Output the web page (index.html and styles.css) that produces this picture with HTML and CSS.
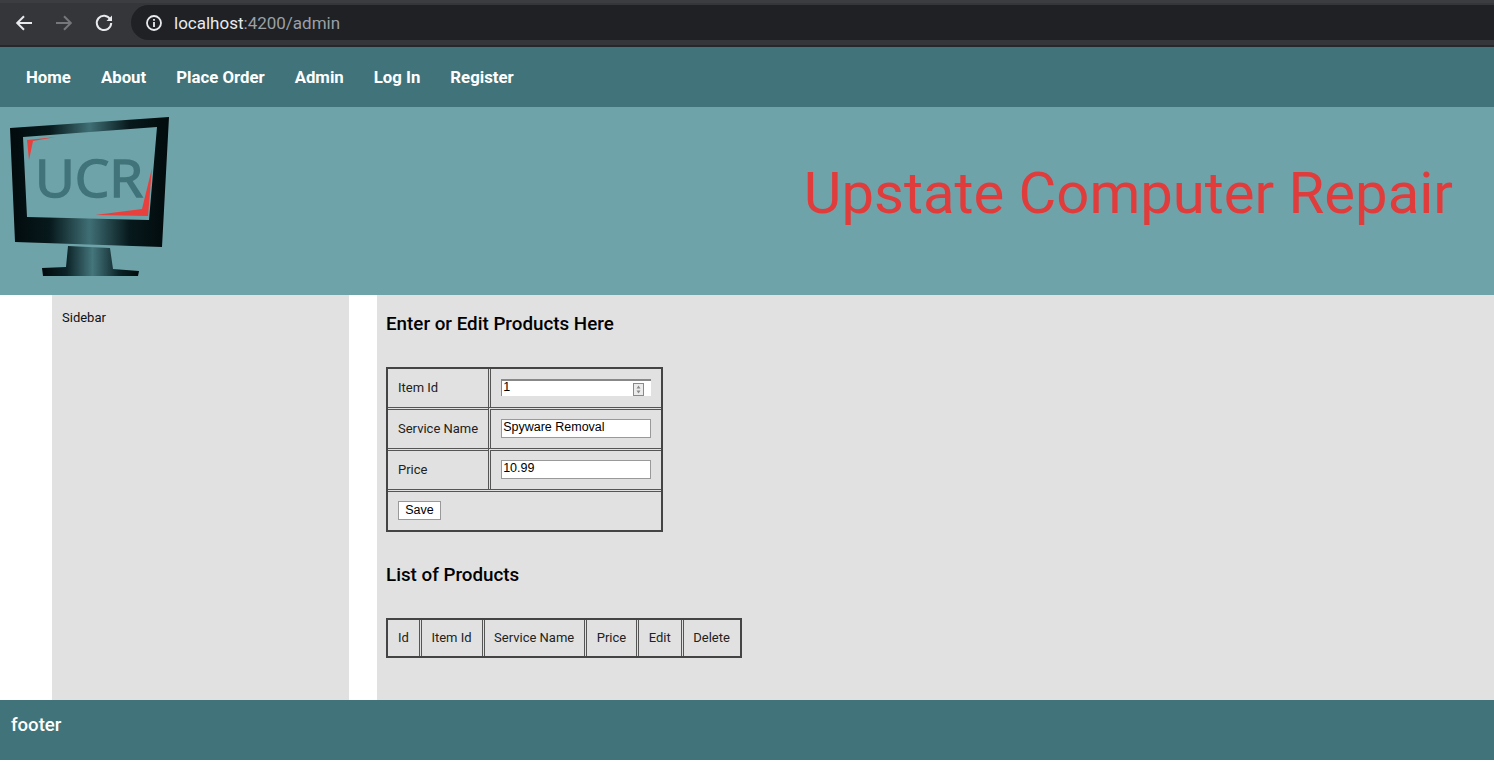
FILE: index.html
```html
<!DOCTYPE html>
<html lang="en">
<head>
<meta charset="utf-8">
<title>Upstate Computer Repair</title>
<link rel="stylesheet" href="styles.css">
</head>
<body>
<div class="chrome">
  <svg class="chrome-ico" width="20" height="20" viewBox="0 0 20 20"><path d="M18 10H3.5M10 3.2L3.2 10l6.8 6.8" fill="none" stroke="#e8eaed" stroke-width="2"/></svg>
  <svg class="chrome-ico" width="20" height="20" viewBox="0 0 20 20"><path d="M2 10H16.5M10 3.2l6.8 6.8L10 16.8" fill="none" stroke="#75777a" stroke-width="2"/></svg>
  <svg class="chrome-ico" width="20" height="20" viewBox="0 0 20 20"><path d="M16.2 6.2A7.2 7.2 0 1 0 17.2 10" fill="none" stroke="#e8eaed" stroke-width="2"/><path d="M18 2.5V8h-5.5z" fill="#e8eaed"/></svg>
  <div class="omnibox">
    <svg width="18" height="18" viewBox="0 0 18 18"><circle cx="9" cy="9" r="7" fill="none" stroke="#e8eaed" stroke-width="1.8"/><path d="M9 8v5M9 5v1.8" stroke="#e8eaed" stroke-width="1.8"/></svg>
    <span class="url"><span class="host">localhost</span>:4200/admin</span>
  </div>
</div>
<nav class="nav">
  <a>Home</a><a>About</a><a>Place Order</a><a>Admin</a><a>Log In</a><a>Register</a>
</nav>
<header class="banner">
  <svg class="logo" width="175" height="188" viewBox="0 107 175 188">
    <defs>
      <linearGradient id="metal" gradientUnits="userSpaceOnUse" x1="10" y1="0" x2="169" y2="0">
        <stop offset="0" stop-color="#020a0c"/><stop offset=".25" stop-color="#07191c"/><stop offset=".5" stop-color="#3f6f75"/><stop offset=".75" stop-color="#07191c"/><stop offset="1" stop-color="#020a0c"/>
      </linearGradient>
      <linearGradient id="stand" gradientUnits="userSpaceOnUse" x1="42" y1="0" x2="139" y2="0">
        <stop offset="0" stop-color="#020a0c"/><stop offset=".25" stop-color="#0b2226"/><stop offset=".52" stop-color="#44767c"/><stop offset=".8" stop-color="#0b2226"/><stop offset="1" stop-color="#020a0c"/>
      </linearGradient>
    </defs>
    <path fill="url(#metal)" fill-rule="evenodd" d="M10 128L169 117 162 247 15 242ZM23 137L157 127 149 220 27 217Z"/>
    <path fill="url(#stand)" d="M68 246L110 248 113 269 139 271 138 276H43L42 268 66 267Z"/>
    <path fill="#e8403c" d="M27 140L56 137 33 141 29 160Z"/>
    <path fill="#e8403c" d="M152 168L148 216 95 215 142 209Z"/>
    <text class="logo-text" x="35" y="197" textLength="108" lengthAdjust="spacingAndGlyphs">UCR</text>
  </svg>
  <h1 class="title">Upstate Computer Repair</h1>
</header>
<div class="body">
  <aside class="sidebar">Sidebar</aside>
  <main class="content">
    <h2 class="head">Enter or Edit Products Here</h2>
    <table class="grid">
      <tr><td>Item Id</td><td><span class="num"><span class="num-val">1</span><svg class="spin" width="11" height="13" viewBox="0 0 11 13"><rect x=".5" y=".5" width="10" height="12" fill="#ececec" stroke="#8a8a8a"/><path d="M5.5 2.5L3.5 5.5h4zM5.5 10.5L3.5 7.5h4z" fill="#8a8a8a"/></svg></span></td></tr>
      <tr><td>Service Name</td><td><input class="inp" type="text" value="Spyware Removal"></td></tr>
      <tr><td>Price</td><td><input class="inp" type="text" value="10.99"></td></tr>
      <tr><td colspan="2"><button class="save" type="button">Save</button></td></tr>
    </table>
    <h2 class="head second">List of Products</h2>
    <table class="grid list">
      <tr><td>Id</td><td>Item Id</td><td>Service Name</td><td>Price</td><td>Edit</td><td>Delete</td></tr>
    </table>
  </main>
</div>
<footer class="footer">footer</footer>
</body>
</html>
```
FILE: styles.css
```css
* { box-sizing: border-box; }
html, body { margin: 0; padding: 0; background: #fff; }
body { font-family: Roboto, "Liberation Sans", sans-serif; width: 1494px; height: 762px; overflow: hidden; }
.chrome { height: 47px; background: #35363a; border-top: 3px solid #3c3d41; border-bottom: 2px solid #26272a; display: flex; align-items: center; padding: 0 0 3px 14px; gap: 20px; }
.chrome-ico { flex: none; }
.omnibox { flex: 1; height: 35px; margin-left: -3px; background: #202124; border-radius: 18px 0 0 18px; display: flex; align-items: center; padding-left: 14px; gap: 11px; color: #9aa0a6; font-size: 17px; }
.host { color: #e8eaed; }
.nav { height: 60px; background: #40747a; display: flex; align-items: center; padding-left: 26px; gap: 30px; }
.nav a { color: #fff; font-weight: 700; font-size: 16.8px; }
.banner { height: 188px; background: #6fa3aa; display: flex; align-items: flex-start; justify-content: space-between; padding-right: 41px; }
.logo { flex: none; }
.logo-text { font-family: "Open Sans", sans-serif; font-size: 52px; fill: #40747a; stroke: #40747a; stroke-width: 1.5px; }
.title { margin: 47px 0 0; color: #e03c3c; font-weight: 400; font-size: 58px; line-height: 78px; }
.body { height: 405px; display: flex; }
.sidebar { width: 297px; margin-left: 52px; background: #e1e1e1; padding: 15px 10px; font-size: 13px; line-height: 16px; color: #111; }
.content { flex: 1; margin-left: 28px; background: #e1e1e1; padding: 18px 0 0 9px; }
.head { margin: 0; font-size: 18.8px; font-weight: 500; line-height: 22px; color: #000; }
.second { margin-top: 32px; }
.grid { border-collapse: separate; border-spacing: 0; border: 2px solid #444; margin-top: 32px; font-size: 13px; color: #222; }
.grid td { padding: 0 10px 2px; height: 38px; }
.grid tr + tr td { border-top: 3px double #555; height: 41px; }
.grid td + td { border-left: 3px double #555; }
.list td { height: 36px; }
.list td + td { padding-left: 9.5px; }
.inp { display: block; width: 150px; height: 19px; border: 1px solid #999; background: #fff; padding: 0 1px 2px; font-family: "Liberation Sans", sans-serif; font-size: 12.5px; color: #000; }
.num { display: flex; width: 150px; height: 17px; background: #fff; border-top: 2px solid #888; border-left: 1px solid #888; font-family: "Liberation Sans", sans-serif; font-size: 12.5px; color: #000; justify-content: space-between; align-items: flex-start; padding: 0 7px 0 1px; line-height: 13px; }
.spin { flex: none; margin-top: 2px; }
.save { height: 19px; width: 43px; padding: 0 0 1px; border: 1px solid #999; background: #fff; font-family: "Liberation Sans", sans-serif; font-size: 12.5px; color: #000; display: block; }
.footer { height: 60px; background: #40747a; color: #fff; font-size: 18.6px; font-weight: 500; padding: 14px 0 0 11px; line-height: 22px; }
```
